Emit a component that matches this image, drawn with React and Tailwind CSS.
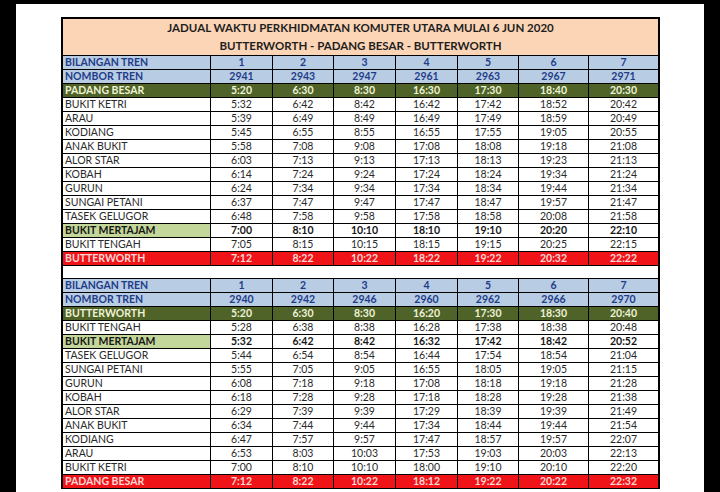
import React from "react";

const cols = "grid grid-cols-[148px_62px_61px_62px_62px_61px_70px_69px]";

const s1 = [
  ["BILANGAN TREN", ["1", "2", "3", "4", "5", "6", "7"], "blue"],
  ["NOMBOR TREN", ["2941", "2943", "2947", "2961", "2963", "2967", "2971"], "blue"],
  ["PADANG BESAR", ["5:20", "6:30", "8:30", "16:30", "17:30", "18:40", "20:30"], "green"],
  ["BUKIT KETRI", ["5:32", "6:42", "8:42", "16:42", "17:42", "18:52", "20:42"], "w"],
  ["ARAU", ["5:39", "6:49", "8:49", "16:49", "17:49", "18:59", "20:49"], "w"],
  ["KODIANG", ["5:45", "6:55", "8:55", "16:55", "17:55", "19:05", "20:55"], "w"],
  ["ANAK BUKIT", ["5:58", "7:08", "9:08", "17:08", "18:08", "19:18", "21:08"], "w"],
  ["ALOR STAR", ["6:03", "7:13", "9:13", "17:13", "18:13", "19:23", "21:13"], "w"],
  ["KOBAH", ["6:14", "7:24", "9:24", "17:24", "18:24", "19:34", "21:24"], "w"],
  ["GURUN", ["6:24", "7:34", "9:34", "17:34", "18:34", "19:44", "21:34"], "w"],
  ["SUNGAI PETANI", ["6:37", "7:47", "9:47", "17:47", "18:47", "19:57", "21:47"], "w"],
  ["TASEK GELUGOR", ["6:48", "7:58", "9:58", "17:58", "18:58", "20:08", "21:58"], "w"],
  ["BUKIT MERTAJAM", ["7:00", "8:10", "10:10", "18:10", "19:10", "20:20", "22:10"], "bm"],
  ["BUKIT TENGAH", ["7:05", "8:15", "10:15", "18:15", "19:15", "20:25", "22:15"], "w"],
  ["BUTTERWORTH", ["7:12", "8:22", "10:22", "18:22", "19:22", "20:32", "22:22"], "red"],
];

const s2 = [
  ["BILANGAN TREN", ["1", "2", "3", "4", "5", "6", "7"], "blue"],
  ["NOMBOR TREN", ["2940", "2942", "2946", "2960", "2962", "2966", "2970"], "blue"],
  ["BUTTERWORTH", ["5:20", "6:30", "8:30", "16:20", "17:30", "18:30", "20:40"], "green"],
  ["BUKIT TENGAH", ["5:28", "6:38", "8:38", "16:28", "17:38", "18:38", "20:48"], "w"],
  ["BUKIT MERTAJAM", ["5:32", "6:42", "8:42", "16:32", "17:42", "18:42", "20:52"], "bm"],
  ["TASEK GELUGOR", ["5:44", "6:54", "8:54", "16:44", "17:54", "18:54", "21:04"], "w"],
  ["SUNGAI PETANI", ["5:55", "7:05", "9:05", "16:55", "18:05", "19:05", "21:15"], "w"],
  ["GURUN", ["6:08", "7:18", "9:18", "17:08", "18:18", "19:18", "21:28"], "w"],
  ["KOBAH", ["6:18", "7:28", "9:28", "17:18", "18:28", "19:28", "21:38"], "w"],
  ["ALOR STAR", ["6:29", "7:39", "9:39", "17:29", "18:39", "19:39", "21:49"], "w"],
  ["ANAK BUKIT", ["6:34", "7:44", "9:44", "17:34", "18:44", "19:44", "21:54"], "w"],
  ["KODIANG", ["6:47", "7:57", "9:57", "17:47", "18:57", "19:57", "22:07"], "w"],
  ["ARAU", ["6:53", "8:03", "10:03", "17:53", "19:03", "20:03", "22:13"], "w"],
  ["BUKIT KETRI", ["7:00", "8:10", "10:10", "18:00", "19:10", "20:10", "22:20"], "w"],
  ["PADANG BESAR", ["7:12", "8:22", "10:22", "18:12", "19:22", "20:22", "22:32"], "red"],
];

const styles = {
  blue: {
    row: "bg-[#b8cce4]",
    name: "font-bold text-[#1f3c88]",
    val: "font-bold text-[#1f3c88]",
    nameBg: "",
  },
  green: {
    row: "bg-[#4f6228]",
    name: "font-bold text-[#eef3d6]",
    val: "font-bold text-[#eef3d6]",
    nameBg: "",
  },
  red: {
    row: "bg-[#f01418]",
    name: "font-bold text-[#ffd6d6]",
    val: "font-bold text-[#ffd6d6]",
    nameBg: "",
  },
  w: {
    row: "bg-white",
    name: "text-[#2a2a2a]",
    val: "text-[#2a2a2a]",
    nameBg: "",
  },
  bm: {
    row: "bg-white",
    name: "font-bold text-[#161616]",
    val: "font-bold text-[#161616]",
    nameBg: "bg-[#c4d79b]",
  },
};

function Row({ name, vals, kind }) {
  const st = styles[kind];
  return (
    <div className={`${cols} h-[14px] ${st.row} border-b border-black leading-[13px]`}>
      <div className={`pl-[2px] border-r border-black whitespace-nowrap text-[10.5px] ${st.name} ${st.nameBg}`}>{name}</div>
      {vals.map((v, i) => (
        <div
          key={i}
          className={`text-center text-[10.5px] ${i < 6 ? "border-r border-black" : ""} ${st.val}`}
        >
          {v}
        </div>
      ))}
    </div>
  );
}

export default function App() {
  return (
    <div
      className="w-[720px] h-[492px] bg-black overflow-hidden pt-[4px] pl-[16px]"
      style={{ fontFamily: "Lato, 'Open Sans', 'Liberation Sans', sans-serif" }}
    >
      <div className="w-[688px] h-[488px] bg-white pt-[13px] pl-[45px]">
        <div className="w-[599px] border-t-2 border-l-2 border-r-2 border-black">
          <div className="h-[37px] bg-[#fcd5b6] border-b border-black flex flex-col items-center pt-0 text-[11.5px] leading-[18px] font-bold text-[#1e1e1e]">
            <div>JADUAL WAKTU PERKHIDMATAN KOMUTER UTARA MULAI 6 JUN 2020</div>
            <div>BUTTERWORTH - PADANG BESAR - BUTTERWORTH</div>
          </div>
          {s1.map(([n, v, k], i) => (
            <Row key={"a" + i} name={n} vals={v} kind={k} />
          ))}
          <div className="h-[13px] bg-white border-b border-black"></div>
          {s2.map(([n, v, k], i) => (
            <Row key={"b" + i} name={n} vals={v} kind={k} />
          ))}
        </div>
      </div>
    </div>
  );
}
